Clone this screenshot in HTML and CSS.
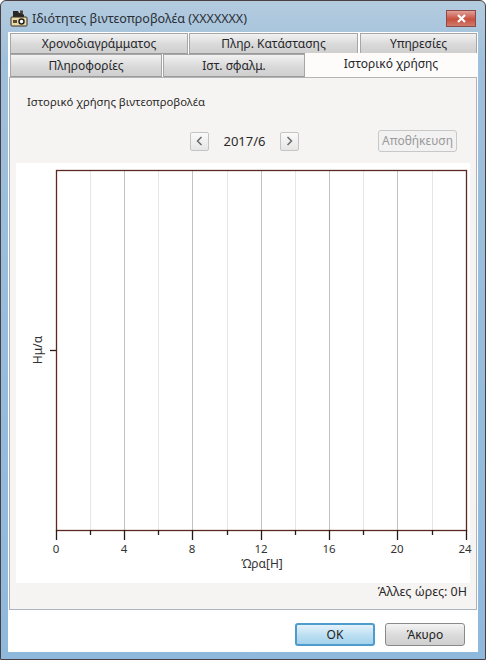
FILE: index.html
```html
<!DOCTYPE html>
<html lang="el">

<head>
    <meta charset="UTF-8">
    <title>Ιδιότητες βιντεοπροβολέα</title>
    <link rel="stylesheet" href="styles.css">
</head>

<body>
    <div class="ventana">
        <div class="titulo">
            <svg class="icono" width="18" height="18" viewBox="0 0 18 18">
                <path d="M3 2h5l1 2h3l2 2v2H3z" fill="#2b2622" />
                <path d="M10 1.500h3v3h-3z" fill="#4a4540" />
                <rect x="1" y="8" width="16" height="9" rx="1" fill="#e9d9a8" stroke="#3a3024" />
                <circle cx="11.500" cy="12.500" r="2.500" fill="#fff" stroke="#222" stroke-width="1.500" />
                <rect x="3" y="11" width="4" height="3" fill="#5a4a30" />
            </svg>
            <span class="titulo-texto">Ιδιότητες βιντεοπροβολέα (XXXXXXX)</span>
            <div class="cerrar">
                <svg width="11" height="9" viewBox="0 0 11 9">
                    <path d="M2 1l7 7M9 1l-7 7" stroke="#fff" stroke-width="2.200" fill="none" />
                </svg>
            </div>
        </div>

        <div class="contenido">
            <div class="fila-tabs fila-arriba">
                <div class="tab tab-a">Χρονοδιαγράμματος</div>
                <div class="tab tab-b">Πληρ. Κατάστασης</div>
                <div class="tab tab-c">Υπηρεσίες</div>
            </div>
            <div class="fila-tabs fila-abajo">
                <div class="tab tab-d">Πληροφορίες</div>
                <div class="tab tab-e">Ιστ. σφαλμ.</div>
                <div class="tab tab-activa">Ιστορικό χρήσης</div>
            </div>

            <div class="panel">
                <p class="panel-titulo">Ιστορικό χρήσης βιντεοπροβολέα</p>
                <div class="barra-fecha">
                    <div class="flecha">
                        <svg width="7" height="10" viewBox="0 0 7 10"><path d="M5.500 1L1.500 5l4 4" stroke="#6a6a6a" stroke-width="1.500" fill="none" /></svg>
                    </div>
                    <span class="fecha">2017/6</span>
                    <div class="flecha">
                        <svg width="7" height="10" viewBox="0 0 7 10"><path d="M1.500 1l4 4-4 4" stroke="#6a6a6a" stroke-width="1.500" fill="none" /></svg>
                    </div>
                    <div class="guardar">Αποθήκευση</div>
                </div>

                <div class="grafico">
                    <svg width="454" height="420" viewBox="0 0 454 420">
                        <g stroke="#e6e6e6">
                            <path d="M74.500 7v360M142.500 7v360M211.500 7v360M279.500 7v360M347.500 7v360M416.500 7v360" />
                        </g>
                        <g stroke="#bcc4c8">
                            <path d="M108.500 7v360M176.500 7v360M245.500 7v360M313.500 7v360M381.500 7v360" />
                        </g>
                        <rect x="40.500" y="7.500" width="410" height="360" fill="none" stroke="#5a2a20" stroke-width="1.300" />
                        <g stroke="#2a1a14" stroke-width="1.300">
                            <path d="M40.500 367v10M108.500 367v10M176.500 367v10M245.500 367v10M313.500 367v10M381.500 367v10M450.500 367v10" />
                            <path d="M74.500 367v5M142.500 367v5M211.500 367v5M279.500 367v5M347.500 367v5M416.500 367v5" />
                            <path d="M34 187.500h6" />
                        </g>
                        <g class="eje-num" text-anchor="middle">
                            <text x="40" y="390">0</text>
                            <text x="108" y="390">4</text>
                            <text x="176" y="390">8</text>
                            <text x="245" y="390">12</text>
                            <text x="313" y="390">16</text>
                            <text x="381" y="390">20</text>
                            <text x="449" y="390">24</text>
                            <text class="eje-nombre" x="246" y="405">Ώρα[Η]</text>
                            <text class="eje-nombre" transform="translate(26 187) rotate(-90)">Ημ/α</text>
                        </g>
                    </svg>
                </div>

                <div class="otras-horas">Άλλες ώρες: 0Η</div>
            </div>

            <div class="pie">
                <div class="boton boton-ok">ΟΚ</div>
                <div class="boton">Άκυρο</div>
            </div>
        </div>
    </div>
</body>

</html>
```

FILE: styles.css
```css
* {
    margin: 0;
    box-sizing: border-box;
    font-family: "Noto Sans", "Open Sans", sans-serif;
}

body {
    width: 486px;
    height: 660px;
    background-color: #fff;
    overflow: hidden;
}

.ventana {
    display: flex;
    flex-direction: column;
    width: 486px;
    height: 660px;
    padding: 0 7px 7px 7px;
    border: 1px solid #4a4044;
    border-radius: 6px 6px 0 0;
    background: linear-gradient(to bottom, #b4cbde, #9fc0dc 60px, #8fb9dc);
}

.titulo {
    display: flex;
    align-items: center;
    height: 31px;
    flex-shrink: 0;
    padding-top: 3px;
}

.icono {
    margin-left: 2px;
    margin-right: 4px;
}

.titulo-texto {
    font-size: 12.500px;
    color: #2a2f36;
}

.cerrar {
    display: flex;
    justify-content: center;
    align-items: center;
    width: 30px;
    height: 17px;
    margin-left: auto;
    margin-right: 2px;
    border: 1px solid #8a4a48;
    background: linear-gradient(to bottom, #e0a098, #c8503f 55%, #d07a6c);
}

.contenido {
    display: flex;
    flex-direction: column;
    flex-grow: 1;
    background-color: #fff;
    padding: 1px 0 0 0;
}

.fila-tabs {
    display: flex;
    padding-left: 2px;
    height: 21px;
    font-size: 12px;
}

.fila-abajo {
    height: 23px;
}

.tab {
    display: flex;
    justify-content: center;
    align-items: center;
    color: #26262a;
    border: 1px solid #a6a6a6;
    border-bottom-color: #9a9a9a;
    background: linear-gradient(to bottom, #f2f2f2, #d9d9d9 55%, #cfcfcf);
}

.tab-a {
    width: 178px;
    margin-right: 1px;
}

.tab-b {
    width: 169px;
    margin-right: 2px;
}

.tab-c {
    width: 117px;
}

.tab-d {
    width: 152px;
    margin-right: 1px;
}

.tab-e {
    width: 142px;
}

.tab-activa {
    width: 172px;
    height: 24px;
    margin-top: -1px;
    padding-bottom: 3px;
    border: 0;
    background: #fdfcfb;
    position: relative;
    z-index: 1;
}

.panel {
    display: flex;
    flex-direction: column;
    width: 468px;
    height: 533px;
    margin-left: 1px;
    border: 1px solid #a9b4c0;
    border-top-color: #b4b4b4;
    background-color: #f6f4f2;
    padding: 0 6px;
}

.panel-titulo {
    font-size: 11.300px;
    color: #2a2a2a;
    margin-top: 16px;
    margin-left: 11px;
    line-height: 16px;
}

.barra-fecha {
    display: flex;
    align-items: center;
    height: 24px;
    margin-top: 19px;
    margin-left: 174px;
}

.flecha {
    display: flex;
    justify-content: center;
    align-items: center;
    width: 19px;
    height: 19px;
    border: 1px solid #c4c4c4;
    border-radius: 2px;
    background: linear-gradient(to bottom, #fafafa, #e6e6e6);
}

.fecha {
    width: 71px;
    text-align: center;
    font-size: 13px;
    color: #2a2a2a;
}

.guardar {
    width: 79px;
    height: 22px;
    margin-left: 79px;
    border: 1px solid #c8c8c8;
    border-radius: 3px;
    font-size: 12px;
    line-height: 20px;
    text-align: center;
    color: #9a9a9a;
    background-color: #f2f2f2;
}

.grafico {
    width: 454px;
    height: 420px;
    margin-top: 10px;
    background-color: #fff;
}

.grafico svg {
    display: block;
    overflow: visible;
}

.eje-num text {
    font-size: 11.500px;
    fill: #333;
    font-family: "Noto Sans", sans-serif;
}

.eje-num .eje-nombre {
    font-size: 12px;
}

.otras-horas {
    font-size: 12.500px;
    color: #2a2a2a;
    text-align: right;
    margin-top: 0;
    margin-right: 3px;
    line-height: 18px;
}

.pie {
    display: flex;
    justify-content: flex-end;
    gap: 10px;
    padding-top: 13px;
    padding-right: 13px;
}

.boton {
    width: 80px;
    height: 23px;
    border: 1px solid #8a8a8a;
    border-radius: 3px;
    font-size: 12px;
    line-height: 21px;
    text-align: center;
    color: #222;
    background: linear-gradient(to bottom, #f4f4f4, #dcdcdc 50%, #cfcfcf);
}

.boton-ok {
    border: 2px solid #4d9ccb;
    line-height: 19px;
    background: linear-gradient(to bottom, #e4f2fa, #bfe0f2 50%, #a4d2ec);
}
```
